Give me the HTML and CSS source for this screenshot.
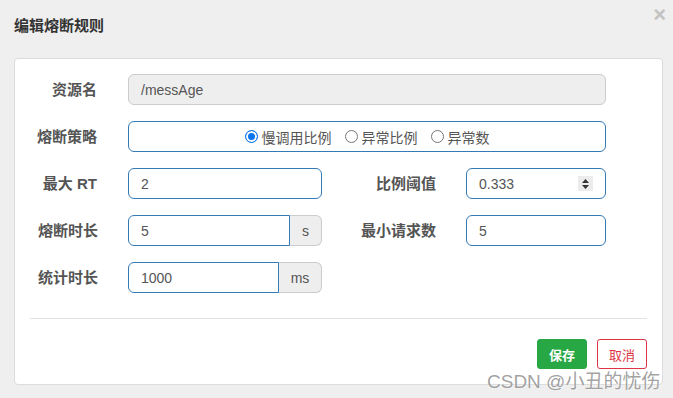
FILE: index.html
```html
<!DOCTYPE html>
<html lang="zh-CN">
<head>
    <meta charset="UTF-8">
    <title>编辑熔断规则</title>
    <link rel="stylesheet" href="styles.css">
</head>
<body>
    <div class="dialog">
        <div class="dialog-header">
            <h2 class="dialog-title">编辑熔断规则</h2>
            <span class="close">×</span>
        </div>
        <div class="panel">
            <form class="rule-form">
                <label class="label">资源名</label>
                <div class="field wide">
                    <input class="input disabled" type="text" value="/messAge" disabled>
                </div>

                <label class="label">熔断策略</label>
                <div class="field wide">
                    <div class="radio-box">
                        <span class="radio"><span class="dot checked"></span>慢调用比例</span>
                        <span class="radio"><span class="dot"></span>异常比例</span>
                        <span class="radio"><span class="dot"></span>异常数</span>
                    </div>
                </div>

                <label class="label">最大 RT</label>
                <div class="field">
                    <input class="input" type="text" value="2">
                </div>
                <label class="label">比例阈值</label>
                <div class="field">
                    <input class="input" type="text" value="0.333">
                    <span class="spinner">
                        <svg width="9" height="12" viewBox="0 0 9 12"><path d="M4.5 1 L8 5 L1 5 Z M4.5 11 L8 7 L1 7 Z" fill="#333"/></svg>
                    </span>
                </div>

                <label class="label">熔断时长</label>
                <div class="field group">
                    <input class="input" type="text" value="5">
                    <span class="addon addon-s">s</span>
                </div>
                <label class="label">最小请求数</label>
                <div class="field">
                    <input class="input" type="text" value="5">
                </div>

                <label class="label">统计时长</label>
                <div class="field group">
                    <input class="input" type="text" value="1000">
                    <span class="addon addon-ms">ms</span>
                </div>
            </form>
            <hr class="divider">
            <div class="actions">
                <button class="btn btn-save" type="button">保存</button>
                <button class="btn btn-cancel" type="button">取消</button>
            </div>
        </div>
    </div>
    <div class="watermark">CSDN @小丑的忧伤</div>
</body>
</html>
```

FILE: styles.css
```css
/* Dialog base */
html, body {
    margin: 0;
    padding: 0;
    width: 673px;
    height: 398px;
    overflow: hidden;
    background: #efefef;
    font-family: "Liberation Sans", Arial, "Noto Sans CJK SC", sans-serif;
    color: #555;
}

.dialog {
    position: relative;
    height: 398px;
}

.dialog-header {
    height: 58px;
    padding: 0 14px;
    box-sizing: border-box;
}

.dialog-title {
    margin: 0;
    padding-top: 16px;
    font-size: 15px;
    line-height: 20px;
    font-weight: bold;
    color: #333;
}

.close {
    position: absolute;
    top: 3px;
    right: 7px;
    font-size: 22px;
    font-weight: bold;
    color: #c2c2c2;
    line-height: 24px;
}

/* White panel holding the form */
.panel {
    margin: 0 10px 0 14px;
    width: 649px;
    height: 327px;
    box-sizing: border-box;
    background: #fff;
    border: 1px solid #dcdcdc;
    border-radius: 4px;
    padding-top: 15px;
}

.rule-form {
    display: grid;
    grid-template-columns: 113px 194px 144px 140px;
    grid-auto-rows: 31px;
    row-gap: 16px;
}

.label {
    font-size: 15px;
    font-weight: bold;
    color: #555;
    text-align: right;
    line-height: 31px;
    padding-right: 31px;
}

.field + .label {
    padding-right: 30px;
}

.field {
    position: relative;
    display: flex;
}

.field.wide {
    grid-column: 2 / 5;
}

.field.wide + .label {
    padding-right: 31px;
}

.input {
    width: 100%;
    min-width: 0;
    height: 31px;
    box-sizing: border-box;
    border: 1px solid #337ab7;
    border-radius: 6px;
    padding: 0 12px;
    font-family: "Liberation Sans", Arial, sans-serif;
    font-size: 14px;
    color: #555;
    background: #fff;
    outline: none;
}

.input.disabled {
    background: #eee;
    border-color: #ccc;
    color: #555;
}

/* Radio group */
.radio-box {
    width: 100%;
    height: 31px;
    box-sizing: border-box;
    border: 1px solid #337ab7;
    border-radius: 6px;
    display: flex;
    justify-content: center;
    align-items: center;
    gap: 13px;
    font-size: 14px;
    color: #555;
}

.radio {
    display: flex;
    align-items: center;
    gap: 4px;
}

.dot {
    width: 11px;
    height: 11px;
    border: 1px solid #767676;
    border-radius: 50%;
    box-sizing: content-box;
    background: #fff;
}

.dot.checked {
    border-color: #0b76ef;
    background: #0b76ef;
    box-shadow: inset 0 0 0 2px #fff;
}

/* Spinner for number field */
.spinner {
    position: absolute;
    right: 13px;
    top: 8px;
    width: 15px;
    height: 15px;
    background: #ececec;
    display: flex;
    align-items: center;
    justify-content: center;
}

/* Input with unit addon */
.group .input {
    border-radius: 6px 0 0 6px;
}

.addon {
    height: 31px;
    box-sizing: border-box;
    border: 1px solid #ccc;
    border-left: none;
    border-radius: 0 6px 6px 0;
    background: #eee;
    font-size: 14px;
    color: #555;
    display: flex;
    align-items: center;
    justify-content: center;
    flex: none;
}

.addon-s {
    width: 32px;
}

.addon-ms {
    width: 43px;
}

.divider {
    margin: 25px 15px 0 15px;
    border: none;
    border-top: 1px solid #e3e3e3;
}

.actions {
    display: flex;
    justify-content: flex-end;
    gap: 10px;
    margin: 20px 15px 0 0;
}

.btn {
    width: 50px;
    height: 30px;
    border-radius: 3px;
    font-family: "Liberation Sans", Arial, "Noto Sans CJK SC", sans-serif;
    font-size: 13px;
    padding: 0;
}

.btn-save {
    background: #28a745;
    border: 1px solid #28a745;
    color: #fff;
    font-weight: bold;
}

.btn-cancel {
    background: #fff;
    border: 1px solid #dc3545;
    color: #dc3545;
}

.watermark {
    position: absolute;
    left: 487px;
    top: 366px;
    font-size: 19px;
    color: rgba(120, 120, 120, 0.7);
    text-shadow: 0 0 2px #fff;
    white-space: nowrap;
}
```
